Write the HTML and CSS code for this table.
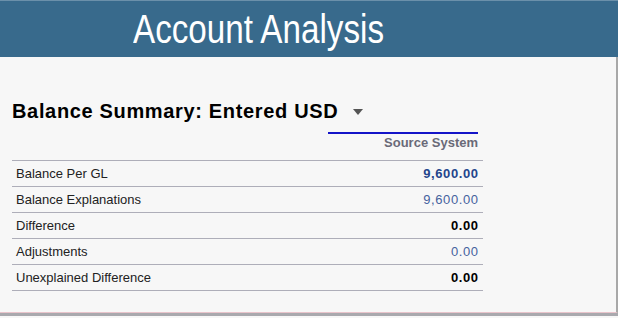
FILE: index.html
```html
<!DOCTYPE html>
<html>
<head>
<meta charset="utf-8">
<link rel="stylesheet" href="styles.css">
</head>
<body>
<div class="app">
  <header class="banner"><span class="banner-title">Account Analysis</span></header>
  <main class="panel">
    <div class="heading">
      <span class="heading-text">Balance Summary: Entered USD</span>
      <span class="caret"></span>
    </div>
    <div class="summary">
      <div class="head-row">
        <div class="head-spacer"></div>
        <div class="head-cell"><span class="head-label">Source System</span></div>
      </div>
      <div class="row"><span class="label">Balance Per GL</span><span class="value strong-blue">9,600.00</span></div>
      <div class="row"><span class="label">Balance Explanations</span><span class="value blue">9,600.00</span></div>
      <div class="row"><span class="label">Difference</span><span class="value strong">0.00</span></div>
      <div class="row"><span class="label">Adjustments</span><span class="value blue">0.00</span></div>
      <div class="row"><span class="label">Unexplained Difference</span><span class="value strong">0.00</span></div>
    </div>
  </main>
  <div class="rule"></div>
  <div class="foot"></div>
</div>
</body>
</html>
```
FILE: styles.css
```css
html, body {
  margin: 0;
  padding: 0;
  background: #f7f7f7;
  font-family: "Liberation Sans", Arial, sans-serif;
}
.app {
  width: 618px;
  height: 318px;
  display: flex;
  flex-direction: column;
  overflow: hidden;
}
.banner {
  height: 51px;
  border-top: 1px solid #6b90aa;
  padding-top: 5px;
  background: #386a8c;
  padding-left: 133px;
  flex: none;
}
.banner-title {
  display: inline-block;
  font-size: 40px;
  line-height: 46px;
  color: #ffffff;
  transform: scaleX(0.83);
  transform-origin: left center;
  white-space: nowrap;
}
.panel {
  flex: 1;
  padding: 42px 0 0 12px;
  border-right: 2px solid #a8a8a8;
  border-bottom: 1px solid #e9c4cb;
  background: #f7f7f7;
}
.rule {
  height: 3px;
  flex: none;
  background: #a9a9ae;
}
.foot {
  height: 2px;
  flex: none;
  background: #f7f7f7;
}
.heading {
  display: flex;
  align-items: center;
  height: 24px;
}
.heading-text {
  font-size: 20px;
  line-height: 24px;
  font-weight: bold;
  letter-spacing: 0.66px;
  color: #000;
}
.caret {
  width: 0;
  height: 0;
  margin-left: 15px;
  margin-top: 2px;
  border-left: 5px solid transparent;
  border-right: 5px solid transparent;
  border-top: 6px solid #555;
}
.summary {
  width: 471px;
  margin-top: 9px;
}
.head-row {
  display: flex;
  border-bottom: 1px solid #aeaeb9;
}
.head-spacer {
  flex: 1;
}
.head-cell {
  width: 150px;
  margin-right: 5px;
  border-top: 2px solid #1414c8;
  padding-bottom: 9px;
  text-align: right;
}
.head-label {
  display: block;
  font-size: 13px;
  line-height: 16px;
  padding-top: 1px;
  font-weight: bold;
  color: #6a6a78;
}
.row {
  display: flex;
  justify-content: space-between;
  height: 25px;
  line-height: 25px;
  font-size: 13px;
  border-bottom: 1px solid #aeaeb9;
  padding: 0 5px 0 4px;
}
.label {
  color: #222;
}
.value {
  color: #000;
  letter-spacing: 0.6px;
  margin-right: -0.6px;
}
.strong-blue {
  font-weight: bold;
  color: #24458c;
}
.blue {
  color: #45629e;
}
.strong {
  font-weight: bold;
  color: #000;
}
```
